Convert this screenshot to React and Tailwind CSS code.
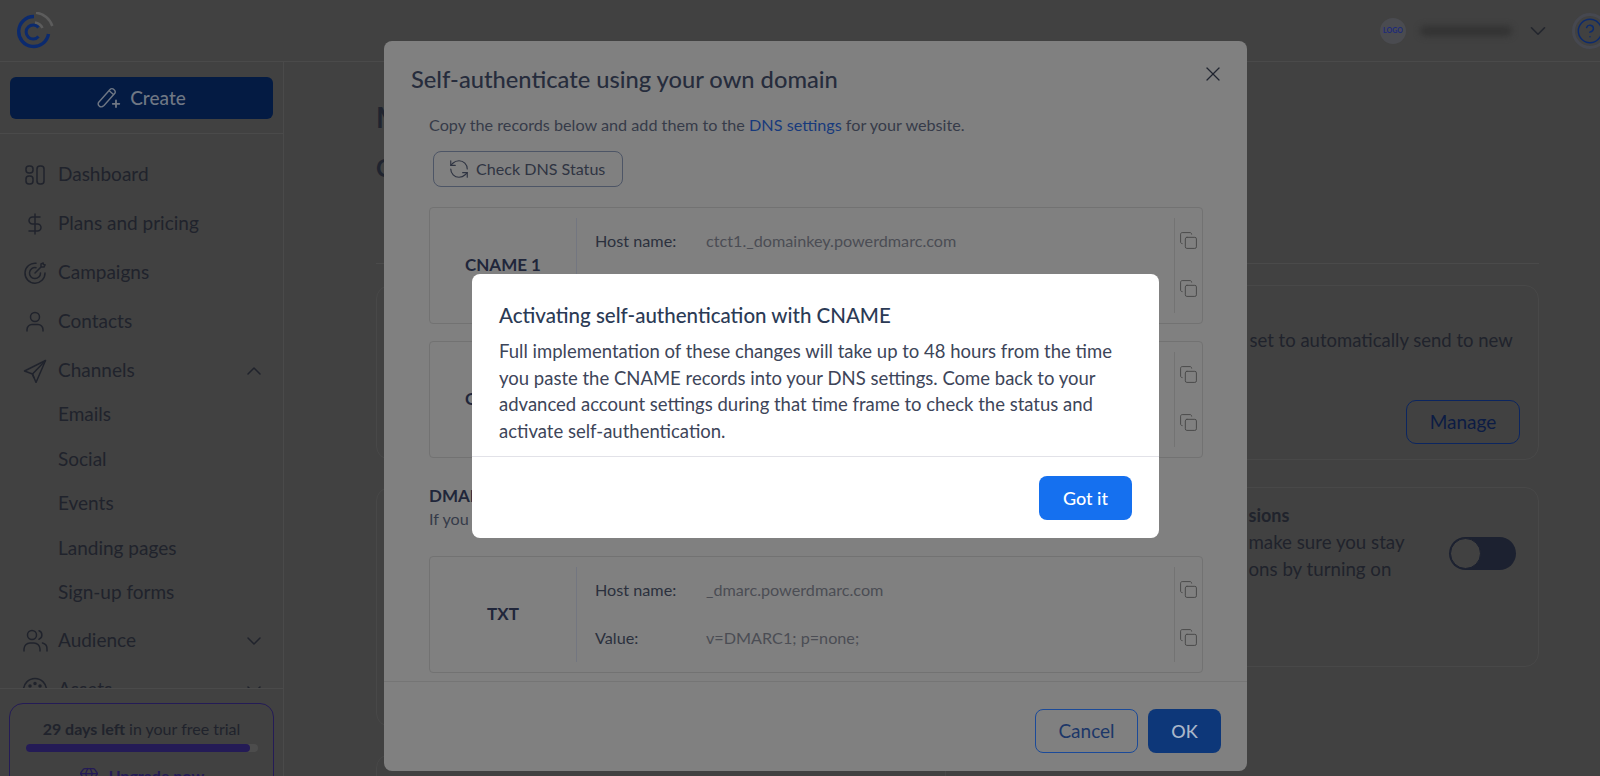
import React from 'react';
import { ChevronDown, ChevronUp, CircleHelp, Copy, DollarSign, Gem, RefreshCcw, X } from 'lucide-react';

const Logo = () => (
  <svg width="38" height="38" viewBox="0 0 38 38" fill="none" className="ml-[17px]">
    <path d="M17 4.500A15 15 0 1 0 31.500 22" stroke="#0b2a6e" strokeWidth="3.400" />
    <path d="M21.500 15.500A7 7 0 1 0 21.500 24.500" stroke="#0b2a6e" strokeWidth="3" />
    <path d="M19 .8A19 19 0 0 1 35.300 14" stroke="#5c5c5c" strokeWidth="2.600" />
    <path d="M18 10.500A9.500 9.500 0 0 1 25.500 16" stroke="#5c5c5c" strokeWidth="2.600" />
  </svg>
);

const PencilPlus = () => (
  <svg width="24" height="24" viewBox="0 0 24 24" fill="none" stroke="#6f7784" strokeWidth="1.400" strokeLinejoin="round" strokeLinecap="round">
    <path d="M1.500 16.500 13 3.500a2.600 2.600 0 0 1 3.800 0l.6.6a2.600 2.600 0 0 1 0 3.600L7 19.500c-1.600 1.500-3.500 1.600-4.700.6-1.100-1-1.400-2.300-.8-3.600Z" />
    <path d="m12.500 5 4 3.500" />
    <path d="M19 14.500v6.500M15.800 17.800h6.500" strokeWidth="1.800" />
  </svg>
);

const DashIcon = () => (
  <svg width="22" height="22" viewBox="0 0 22 22" fill="none" stroke="currentColor" strokeWidth="1.500">
    <rect x="2" y="2" width="7" height="7" rx="3" />
    <rect x="2" y="12" width="7" height="8" rx="3" />
    <rect x="13" y="2" width="7" height="18" rx="3" />
  </svg>
);

const TargetIcon = () => (
  <svg width="24" height="24" viewBox="0 0 24 24" fill="none" stroke="currentColor" strokeWidth="1.500" strokeLinecap="round">
    <path d="M13 2.200A10 10 0 1 0 22 12" />
    <path d="M13 6.700A5.500 5.500 0 1 0 17.500 12" />
    <path d="M12 12l6-6M18 6V3l2-1 .5 1.500L22 4l-1 2h-3" />
  </svg>
);

const PersonIcon = () => (
  <svg width="22" height="22" viewBox="0 0 22 22" fill="none" stroke="currentColor" strokeWidth="1.500" strokeLinecap="round">
    <circle cx="11" cy="6" r="4.500" />
    <path d="M3 20v-1.500a5 5 0 0 1 5-5h6a5 5 0 0 1 5 5V20" />
  </svg>
);

const PlaneIcon = () => (
  <svg width="24" height="24" viewBox="0 0 24 24" fill="none" stroke="currentColor" strokeWidth="1.500" strokeLinejoin="round">
    <path d="M22.500 1.500 1.500 12l8 3 3.500 8.500 9.500-22Z" />
    <path d="M22.500 1.500 9.500 15l1.500 4" />
  </svg>
);

const PeopleIcon = () => (
  <svg width="26" height="24" viewBox="0 0 26 24" fill="none" stroke="currentColor" strokeWidth="1.500" strokeLinecap="round">
    <circle cx="10" cy="6" r="4.500" />
    <path d="M2 22v-2a6 6 0 0 1 6-6h4a6 6 0 0 1 6 6v2" />
    <path d="M17 1.800a4.500 4.500 0 0 1 0 8.400M20.500 14a6 6 0 0 1 4.500 6v2" />
  </svg>
);

const CookieIcon = () => (
  <svg width="26" height="26" viewBox="0 0 26 26" fill="none" stroke="currentColor" strokeWidth="1.500">
    <circle cx="13" cy="13" r="11.500" />
    <circle cx="8" cy="9" r="1" fill="currentColor" />
    <circle cx="13" cy="6.500" r="1" fill="currentColor" />
    <circle cx="18" cy="9" r="1" fill="currentColor" />
  </svg>
);

function NavRow({ icon, label, chevron }) {
  return (
    <div className="h-[49px] flex items-center text-[#20232c]">
      <div className="w-[58px] flex justify-center pl-[16px] pr-[4px] shrink-0">{icon}</div>
      <span className="text-[19px] flex-1">{label}</span>
      {chevron === 'up' && <ChevronUp className="w-[24px] h-[24px] mr-[17px]" strokeWidth={1.500} />}
      {chevron === 'down' && <ChevronDown className="w-[24px] h-[24px] mr-[17px]" strokeWidth={1.500} />}
    </div>
  );
}

function SubRow({ label }) {
  return <div className="h-[44.500px] flex items-center pl-[58px] text-[19px] text-[#20232c]">{label}</div>;
}

function Sidebar() {
  return (
    <aside className="w-[284px] shrink-0 border-r border-[#4a4a4a] flex flex-col min-h-0">
      <div className="h-[72px] shrink-0 border-b border-[#4a4a4a] pt-[15px] px-[10px]">
        <div className="h-[42px] w-[263px] rounded-[6px] bg-[#041b43] flex items-center justify-center gap-[9px] text-[#6f7784] text-[19px] font-medium">
          <PencilPlus />
          Create
        </div>
      </div>
      <nav className="flex-1 min-h-0 overflow-hidden pt-[16px]">
        <NavRow icon={<DashIcon />} label="Dashboard" />
        <NavRow icon={<DollarSign className="w-[24px] h-[24px]" strokeWidth={1.500} />} label="Plans and pricing" />
        <NavRow icon={<TargetIcon />} label="Campaigns" />
        <NavRow icon={<PersonIcon />} label="Contacts" />
        <NavRow icon={<PlaneIcon />} label="Channels" chevron="up" />
        <div className="-mt-[3px] mb-[1.500px]">
          <SubRow label="Emails" />
          <SubRow label="Social" />
          <SubRow label="Events" />
          <SubRow label="Landing pages" />
          <SubRow label="Sign-up forms" />
        </div>
        <NavRow icon={<PeopleIcon />} label="Audience" chevron="down" />
        <NavRow icon={<CookieIcon />} label="Assets" chevron="down" />
      </nav>
      <div className="h-[88px] shrink-0 border-t border-[#4a4a4a] pt-[14px] pl-[9px] overflow-hidden">
        <div className="w-[265px] h-[110px] rounded-[14px] border border-[#241b56] px-[16px] pt-[13px]">
          <p className="text-[16px] leading-[24px] text-center text-[#20232c] whitespace-nowrap">
            <span className="font-bold">29 days left</span> in your free trial
          </p>
          <div className="h-[8px] w-[232px] mt-[3px] rounded-full bg-[#4c4c4c]">
            <div className="h-full w-[224px] rounded-full bg-[#241b56]" />
          </div>
          <div className="flex items-center justify-center gap-[10px] mt-[12px] text-[#241b56] font-bold text-[16px]">
            <Gem className="w-[20px] h-[20px]" strokeWidth={1.500} />
            Upgrade now
          </div>
        </div>
      </div>
    </aside>
  );
}

function Header() {
  return (
    <header className="h-[62px] shrink-0 border-b border-[#4a4a4a] flex items-center">
      <Logo />
      <div className="ml-auto flex items-center">
        <div className="w-[26px] h-[26px] rounded-full bg-[#4a4b50] flex items-center justify-center text-[7px] font-bold text-[#1d2a7a]">LOGO</div>
        <div className="w-[92px] h-[10px] ml-[14px] rounded-full bg-[#333333] blur-[3px]" />
        <ChevronDown className="w-[26px] h-[26px] ml-[13px] text-[#23262e]" strokeWidth={1.500} />
        <div className="w-[36px] h-[36px] ml-[21px] -mr-[8px] rounded-full border-[3px] border-[#464850] flex items-center justify-center">
          <CircleHelp className="w-[28px] h-[28px] text-[#0b2a6e]" strokeWidth={1.250} />
        </div>
      </div>
    </header>
  );
}

function Main() {
  return (
    <main className="flex-1 min-w-0 pl-[92px] pr-[61px] pt-[38px] text-[#20232c]">
      <h1 className="text-[28px] leading-[34px] font-bold text-[#20242f]">Manage</h1>
      <h2 className="text-[24px] leading-[30px] mt-[19px] font-bold text-[#20242f]">Content</h2>
      <div className="h-[81px] border-b border-[#4a4a4a]" />
      <div className="grid grid-cols-2 gap-[24px] mt-[21px]">
        <div className="flex flex-col gap-[27px]">
          <div className="h-[175px] rounded-[14px] border border-[#484848]" />
          <div className="h-[240px] rounded-[14px] border border-[#484848]" />
          <div className="h-[120px] rounded-[14px] border border-[#484848]" />
        </div>
        <div className="flex flex-col gap-[27px]">
          <div className="h-[175px] rounded-[14px] border border-[#484848] pl-[279px] pr-[18px] pt-[41px]">
            <p className="text-[18.500px] leading-[26px] whitespace-nowrap">set to automatically send to new</p>
            <div className="flex justify-end mt-[47px]">
              <div className="w-[114px] h-[44px] shrink-0 rounded-[10px] border border-[#0b2560] flex items-center justify-center text-[19px] text-[#0c1c44]">Manage</div>
            </div>
          </div>
          <div className="h-[180px] rounded-[14px] border border-[#484848] pl-[278px] pt-[14px] flex">
            <div className="w-[200px] shrink-0 text-[18.700px] leading-[27px] whitespace-nowrap">
              <p className="font-bold text-[18px]">sions</p>
              <p>make sure you stay</p>
              <p>ons by turning on</p>
            </div>
            <div className="w-[67px] h-[33px] mt-[35px] shrink-0 rounded-full bg-[#1c2130] flex items-center">
              <div className="w-[31px] h-[31px] ml-[1px] rounded-full bg-[#414141] border border-[#1c2130]" />
            </div>
          </div>
        </div>
      </div>
    </main>
  );
}

function RecordBox({ label, host, value }) {
  return (
    <div className="h-[117px] rounded-[4px] border border-[#727272] flex py-[10px]">
      <div className="w-[147px] shrink-0 border-r border-[#737680] flex items-center justify-center pb-[1px] text-[17px] font-bold text-[#20263a]">{label}</div>
      <div className="flex-1 pl-[18px] pt-[7px] text-[16.200px] leading-[32px]">
        <div className="flex h-[48px]">
          <span className="w-[111px] text-[#2b303d]">Host name:</span>
          <span className="text-[#4b4d54]">{host}</span>
        </div>
        <div className="flex">
          <span className="w-[111px] text-[#2b303d]">Value:</span>
          <span className="text-[#4b4d54]">{value}</span>
        </div>
      </div>
      <div className="w-[28px] shrink-0 border-l border-[#737373] flex flex-col items-center pt-[13px] gap-[29px] text-[#4a4a4a]">
        <Copy className="w-[19px] h-[19px]" strokeWidth={1.250} />
        <Copy className="w-[19px] h-[19px]" strokeWidth={1.250} />
      </div>
    </div>
  );
}

function DnsModal() {
  return (
    <div className="absolute left-[384px] top-[41px] w-[863px] h-[730px] rounded-[8px] bg-[#808080] flex flex-col">
      <div className="flex items-center justify-between pl-[27px] pr-[22px] pt-[23px]">
        <h2 className="text-[23.700px] leading-[30px] font-medium text-[#262c3c]">Self-authenticate using your own domain</h2>
        <X className="w-[24px] h-[24px] -mt-[11px] text-[#20242f]" strokeWidth={1.250} />
      </div>
      <div className="flex-1 pl-[45px] pr-[44px] min-h-0 overflow-hidden">
        <p className="mt-[19px] text-[16.200px] leading-[24px] text-[#363b49]">
          Copy the records below and add them to the <span className="text-[#173a7c]">DNS settings</span> for your website.
        </p>
        <div className="mt-[14px] ml-[4px] w-[190px] h-[36px] rounded-[8px] border border-[#4d5566] flex items-center pl-[14px] gap-[6px] text-[16.100px] text-[#2f3442]">
          <RefreshCcw className="w-[22px] h-[22px]" strokeWidth={1.250} />
          Check DNS Status
        </div>
        <div className="mt-[20px]">
          <RecordBox label="CNAME 1" host="ctct1._domainkey.powerdmarc.com" value="" />
        </div>
        <div className="mt-[17px]">
          <RecordBox label="CNAME 2" host="" value="" />
        </div>
        <h3 className="mt-[25px] text-[17px] leading-[25px] font-bold text-[#20263a]">DMARC</h3>
        <p className="text-[16.200px] leading-[22px] text-[#363b49]">If you</p>
        <div className="mt-[26px]">
          <RecordBox label="TXT" host="_dmarc.powerdmarc.com" value="v=DMARC1; p=none;" />
        </div>
      </div>
      <div className="h-[90px] shrink-0 border-t border-[#757575] flex justify-end items-start pt-[27px] pr-[26px] gap-[10px]">
        <div className="w-[103px] h-[44px] rounded-[8px] border border-[#1b4a99] flex items-center justify-center text-[19px] text-[#1c3768]">Cancel</div>
        <div className="w-[73px] h-[44px] rounded-[8px] bg-[#0d3779] flex items-center justify-center text-[18px] font-medium text-[#a9b6c9]">OK</div>
      </div>
    </div>
  );
}

function ActivateModal() {
  return (
    <div className="absolute left-[472px] top-[274px] w-[687px] h-[264px] rounded-[8px] bg-white flex flex-col">
      <div className="h-[183px] border-b border-[#e2e2e8] pl-[27px] pr-[27px] pt-[26px]">
        <h2 className="text-[20.500px] leading-[30px] font-medium text-[#2b3a55]">Activating self-authentication with CNAME</h2>
        <p className="mt-[8px] text-[18.500px] leading-[26.700px] text-[#3d4559]">
          Full implementation of these changes will take up to 48 hours from the time you paste the CNAME records into your DNS settings. Come back to your advanced account settings during that time frame to check the status and activate self-authentication.
        </p>
      </div>
      <div className="flex justify-end pt-[19px] pr-[27px]">
        <div className="w-[93px] h-[44px] rounded-[8px] bg-[#1570ef] flex items-center justify-center text-white text-[18px] font-medium">Got it</div>
      </div>
    </div>
  );
}

export default function App() {
  return (
    <div className="relative h-[776px] w-full overflow-hidden bg-[#414141] flex flex-col font-[Lato,sans-serif]">
      <Header />
      <div className="flex flex-1 min-h-0">
        <Sidebar />
        <Main />
      </div>
      <DnsModal />
      <ActivateModal />
    </div>
  );
}
